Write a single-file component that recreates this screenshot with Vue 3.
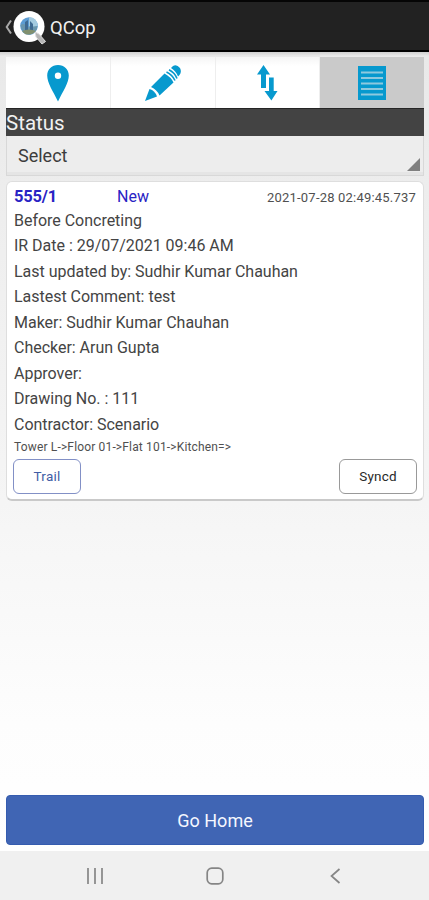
<script setup>
const details = [
  'Before Concreting',
  'IR Date : 29/07/2021 09:46 AM',
  'Last updated by: Sudhir Kumar Chauhan',
  'Lastest Comment: test',
  'Maker: Sudhir Kumar Chauhan',
  'Checker: Arun Gupta',
  'Approver:',
  'Drawing No. : 111',
  'Contractor: Scenario',
]
</script>

<template>
  <div class="screen">
    <header class="bar">
      <svg class="logo" width="46" height="51" viewBox="0 0 46 51">
        <path d="M11 20.500L6.700 27L11 33.500" fill="none" stroke="#a8a8a8" stroke-width="2" />
        <circle cx="29" cy="26.500" r="15.500" fill="#fff" />
        <circle cx="29" cy="26" r="8.800" fill="#5c9cd3" />
        <path d="M29 17.200Q37 17 37.800 26L33 28L29 26Z" fill="#a4cbe0" />
        <path d="M20.500 25Q24 22 29 27L37.500 26Q37 33 30 34.800Q22 34 20.500 25Z" fill="#6a96ad" />
        <path d="M25 31V22l3-2v11ZM30 32V21l3 3v8Z" fill="#3f6a92" />
        <path d="M22 31Q29 28 36 31Q31 36 25 34Z" fill="#81906f" />
        <path d="M35 32L39 34L45.500 41.500L42 44L36 37Z" fill="#b4b4b4" stroke="#dedede" stroke-width="1" />
      </svg>
      <span class="app-name">QCop</span>
    </header>

    <main class="content">
      <nav class="tabs">
        <div class="tab">
          <svg width="24" height="38" viewBox="0 0 24 38"><path fill="#0799ce" fill-rule="evenodd" d="M12 1C5.800 1 1.200 5.500 1.200 11.500C1.200 19 7 27 12 37.500C17 27 22.800 19 22.800 11.500C22.800 5.500 18.200 1 12 1ZM12 8.500a3.200 3.200 0 1 0 0 6.400a3.200 3.200 0 0 0 0-6.400Z" /></svg>
        </div>
        <div class="tab">
          <svg width="38" height="38" viewBox="0 0 38 38">
            <g fill="#0799ce">
              <path d="M1 37L5.500 25Q11 26.500 13 32.500Z" />
              <path d="M7 23L20.500 9.500Q27 13 29.500 18.500L15.500 31.500Q13 25.500 7 23Z" />
              <path d="M27 4L29 2Q32.500-.3 36 4Q38 8 35.500 11L34 12.500Q32 7 27 4Z" />
            </g>
            <path d="M22.500 8Q28.500 11 31 16.500M25 5.800Q31 9 33 14.500" fill="none" stroke="#0799ce" stroke-width="1.600" />
          </svg>
        </div>
        <div class="tab transfer">
          <svg width="22" height="37" viewBox="0 0 22 37"><path fill="#0799ce" d="M7.500 1L14 10.500H10V24H5V10.500H1ZM13 13.500H17.700V27H21.500L15.400 36.500L8.500 27H13Z" /></svg>
        </div>
        <div class="tab selected">
          <svg width="28" height="36" viewBox="0 0 28 36"><path fill="#0799ce" d="M0 1H28V35H0Z" /><path d="M3 7.500H25M3 13H25M3 18.500H25M3 24H25M3 29.500H25" stroke="#8ec9de" stroke-width="2" /></svg>
        </div>
      </nav>
      <div class="status">Status</div>
      <div class="select"><span>Select</span><svg width="13" height="13" viewBox="0 0 13 13"><path d="M13 0V13H0Z" fill="#808080" /></svg></div>

      <section class="card">
        <div class="card-head">
          <b class="number">555/1</b>
          <span class="state">New</span>
          <time>2021-07-28 02:49:45.737</time>
        </div>
        <div v-for="(line, i) in details" :key="i" class="line"><span>{{ line }}</span></div>
        <div class="location">Tower L-&gt;Floor 01-&gt;Flat 101-&gt;Kitchen=&gt;</div>
        <div class="actions">
          <button class="trail">Trail</button>
          <button class="sync">Syncd</button>
        </div>
      </section>
      <button class="home">Go Home</button>
    </main>

    <footer class="system">
      <svg width="18" height="18" viewBox="0 0 18 18"><path d="M2 1V17M9 1V17M16 1V17" stroke="#8c8c8c" stroke-width="1.800" /></svg>
      <svg width="18" height="18" viewBox="0 0 18 18"><rect x="1.200" y="1.200" width="15.600" height="15.600" rx="4.500" fill="none" stroke="#858585" stroke-width="1.700" /></svg>
      <svg width="18" height="18" viewBox="0 0 18 18"><path d="M13.500 2L5.500 9L13.500 16" fill="none" stroke="#858585" stroke-width="1.700" /></svg>
    </footer>
  </div>
</template>

<style>
body { margin: 0; }
</style>
<style scoped>
* { box-sizing: border-box; }
.screen { width: 429px; height: 900px; display: flex; flex-direction: column; overflow: hidden; font-family: Roboto, sans-serif; color: #444; background: #fff; }
.bar { height: 52px; flex: none; display: flex; align-items: flex-start; background: #222; border-top: 2px solid #050505; border-bottom: 2px solid #000; color: #f1f1f1; }
.logo { flex: none; margin-top: -2px; }
.app-name { margin-left: 4px; line-height: 52px; font-size: 18.500px; }
.content { height: 799px; flex: none; display: flex; flex-direction: column; padding: 5px 5px 6px 6px; background: linear-gradient(#cfcfcf 0, #e9e9e9 4px, #efefef 200px, #f5f5f5 450px, #fdfdfd 670px, #fff); }
.tabs { height: 51px; flex: none; display: grid; grid-template-columns: 105px 105px 104px 104px; background: linear-gradient(#f5f5f5, #fff 9px); }
.tab { display: flex; align-items: center; justify-content: center; border-right: 1px solid #eee; }
.tab.transfer { padding-right: 1px; }
.tab.selected { background: #cacaca; border: 0; }
.status { height: 28px; flex: none; background: #434343; border-top: 1px solid #252525; color: #f1f1f1; font-size: 20.500px; line-height: 28px; }
.select { height: 40px; flex: none; display: flex; justify-content: space-between; padding: 0 3px 0 11px; background: #ededed; border: 1px solid #d8d8d8; border-top: 0; box-shadow: inset 0 -3px #e5e5e5; font-size: 18px; line-height: 39px; color: #3c3c3c; }
.select svg { align-self: flex-end; margin-bottom: 4px; }
.card { height: 320px; flex: none; margin-top: 5px; padding: 3px 7px 6px; background: #fff; border: 1px solid #dedede; border-bottom: 2px solid #c9c9c9; border-radius: 6px; }
.card-head { height: 22.500px; display: grid; grid-template-columns: 103px 1fr auto; line-height: 24px; font-size: 16px; color: #2923c4; }
.number { font-size: 16.500px; letter-spacing: -.2px; }
.card-head time { color: #505050; font-size: 13px; letter-spacing: .2px; line-height: 25px; }
.line { height: 25.500px; line-height: 25.500px; font-size: 16px; letter-spacing: -.02px; white-space: nowrap; }
.location { height: 16.500px; font-size: 12px; line-height: 20px; letter-spacing: .16px; color: #505050; }
.actions { display: flex; justify-content: space-between; margin: 5px -1px 0; }
button { font-family: inherit; padding: 0; }
.actions button { height: 35px; background: #fff; border: 1px solid #999; border-radius: 6px; font-size: 13.500px; letter-spacing: .2px; }
.actions .trail { width: 68px; color: #415da5; border-color: #8290c6; }
.actions .sync { width: 78px; color: #292929; }
.home { height: 50px; flex: none; margin-top: auto; border: 1px solid #355caf; border-radius: 4px; background: #4065b4; color: #f5f7ff; font-size: 18px; }
.system { height: 49px; flex: none; display: grid; grid-template-columns: repeat(3, 120px); justify-content: center; justify-items: center; align-items: center; background: #f0f0f0; }
</style>
